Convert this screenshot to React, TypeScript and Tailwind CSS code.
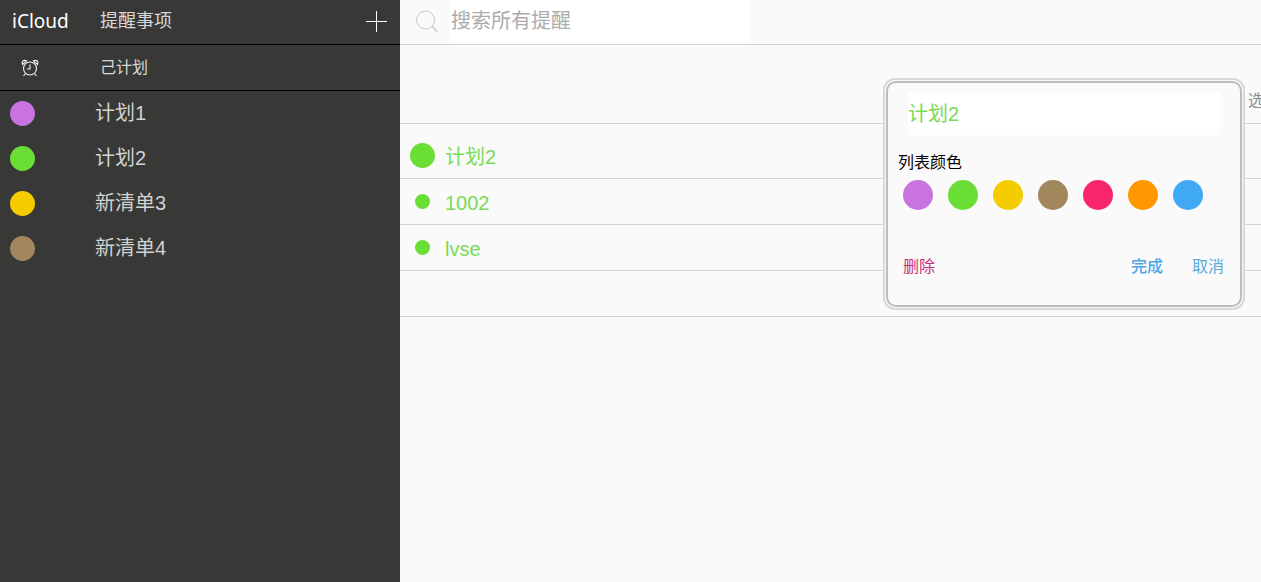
const cjk = "font-['Liberation_Sans','Noto_Sans_CJK_SC',sans-serif]";

const lists = [
  { name: "计划1", color: "bg-[#c973e0]" },
  { name: "计划2", color: "bg-[#6ade35]" },
  { name: "新清单3", color: "bg-[#f5cc00]" },
  { name: "新清单4", color: "bg-[#a2865e]" },
];

const swatches = [
  "bg-[#c973e0]",
  "bg-[#6ade35]",
  "bg-[#f5cc00]",
  "bg-[#a2865e]",
  "bg-[#f8256a]",
  "bg-[#ff9800]",
  "bg-[#3fa9f5]",
];

function AlarmIcon() {
  return (
    <svg width="20" height="20" viewBox="0 0 20 20" fill="none" stroke="#f0f0f0" strokeWidth="1.1">
      <circle cx="10" cy="10.5" r="6.5" />
      <path d="M10 6.500v4.500h-3" />
      <path d="M2.500 6.500 C1 3.500 3.500 1.500 6.500 2.800 Z" />
      <path d="M17.500 6.500 C19 3.500 16.500 1.500 13.500 2.800 Z" />
      <path d="M5.500 15.500 L3.500 18 M14.500 15.500 L16.500 18" />
    </svg>
  );
}

function PlusIcon() {
  return (
    <svg width="21" height="21" viewBox="0 0 21 21" stroke="#ffffff" strokeWidth="1">
      <path d="M0 10.500h21M10.500 0v21" />
    </svg>
  );
}

function SearchIcon() {
  return (
    <svg width="24" height="24" viewBox="0 0 24 24" fill="none" stroke="#c8c8c8" strokeWidth="1">
      <circle cx="10.500" cy="10" r="9" />
      <path d="M17 16.500 L22.500 22" strokeWidth="1.400" />
    </svg>
  );
}

function SideBar() {
  return (
    <aside className="w-[400px] shrink-0 bg-[#383836] h-full">
      <div className="flex h-[45px] items-center border-b border-black pb-[2px]">
        <span className="w-[100px] pl-3 text-[19px] text-white font-['Noto_Sans',sans-serif]">iCloud</span>
        <span className={`text-lg text-[#d8d8d8] ${cjk}`}>提醒事项</span>
        <div className="ml-auto mr-[13px] flex">
          <PlusIcon />
        </div>
      </div>
      <div className="flex h-[46px] items-center border-b border-black">
        <div className="w-[100px] pl-5">
          <AlarmIcon />
        </div>
        <span className={`text-base text-[#d8d8d8] ${cjk}`}>己计划</span>
      </div>
      {lists.map((l) => (
        <div key={l.name} className="flex h-[45px] items-center pl-[10px]">
          <div className={`size-[25px] rounded-full ${l.color}`} />
          <span className={`ml-[60px] -mt-[2px] text-[20px] text-[#d2d2d2] ${cjk}`}>{l.name}</span>
        </div>
      ))}
    </aside>
  );
}

function Popup() {
  return (
    <div className="absolute left-[883px] top-[78px] w-[362px] h-[232px] rounded-[12px] border-2 border-[#d8d8d8] bg-[#fafafa] p-px">
      <div className={`h-full rounded-[10px] border-2 border-[#bcbcbc] bg-[#fafafa] pt-[10px] ${cjk}`}>
        <div className="mx-[20px] flex h-[42px] items-center bg-white text-[20px] text-[#78da55]">计划2</div>
        <div className="mt-[17px] ml-[10px] h-[22px] text-base leading-[22px] text-black">列表颜色</div>
        <div className="mt-[6px] ml-[15px] flex gap-[15px]">
          {swatches.map((c) => (
            <div key={c} className={`size-[30px] rounded-full ${c}`} />
          ))}
        </div>
        <div className="mt-[45px] flex h-6 items-center pl-[15px] pr-[16px] text-base">
          <span className="text-[#c9307c]">删除</span>
          <span className="ml-auto font-medium text-[#4ea5e6]">完成</span>
          <span className="ml-[29px] text-[#5aaad8]">取消</span>
        </div>
      </div>
    </div>
  );
}

function Row({ size, text }: { size: string; text: string }) {
  return (
    <div className="flex h-[46px] items-center border-b border-[#d4d4d4]">
      <div className="flex w-[45px] justify-center pr-[1px]">
        <div className={`rounded-full bg-[#6ade35] ${size}`} />
      </div>
      <span className={`pt-[3px] text-[20px] text-[#78da55] ${cjk}`}>{text}</span>
    </div>
  );
}

export default function App() {
  return (
    <div className="relative flex h-[582px] w-[1261px] overflow-hidden bg-[#fafafa]">
      <SideBar />
      <main className="flex-1 min-w-0">
        <div className="flex h-[45px] border-b border-[#d4d4d4]">
          <div className="flex w-[49px] items-start pl-[15px] pt-[10px]">
            <SearchIcon />
          </div>
          <div className={`w-[301px] bg-white pl-[2px] text-[20px] leading-[42px] text-[#ababab] ${cjk}`}>搜索所有提醒</div>
        </div>
        <div className="flex h-[79px] justify-end border-b border-[#d4d4d4] overflow-hidden">
          <span className={`mt-[44px] w-[13px] shrink-0 whitespace-nowrap text-base text-[#8c8c8c] ${cjk}`}>选项</span>
        </div>
        <div className="pt-[9px]">
          <Row size="size-[25px]" text="计划2" />
        </div>
        <Row size="size-[15px]" text="1002" />
        <Row size="size-[15px]" text="lvse" />
        <div className="h-[46px] border-b border-[#d4d4d4]" />
      </main>
      <Popup />
    </div>
  );
}
